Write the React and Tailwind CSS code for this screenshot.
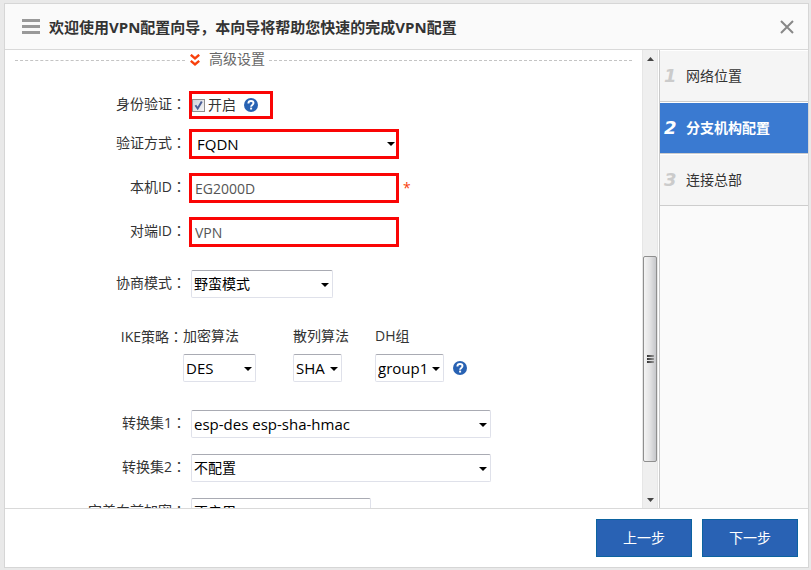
import React, { useState } from 'react';

const steps = [
  { no: '1', title: '网络位置' },
  { no: '2', title: '分支机构配置' },
  { no: '3', title: '连接总部' },
];

const Colon = () => <span className="font-['Noto_Sans_CJK_TC',sans-serif]">：</span>;

const HelpIcon = () => (
  <button type="button" aria-label="帮助" className="shrink-0 cursor-pointer">
    <svg width="14" height="14" viewBox="0 0 14 14" className="block">
      <circle cx="7" cy="7" r="7" fill="#2862b3" />
      <path d="M4.4 5.4C4.4 3.8 5.5 3 7 3s2.5.8 2.5 2.1c0 1.8-2.4 1.8-2.4 3.6" fill="none" stroke="#fff" strokeWidth="1.9" />
      <rect x="6.1" y="9.6" width="2" height="1.9" fill="#fff" />
    </svg>
  </button>
);

const Select = ({ id, options, className = '', textSize = 'text-[15px]', highlight = false }) => (
  <div className={`relative ${className}`}>
    <select
      id={id}
      className={`block w-full appearance-none bg-white text-black outline-none ${textSize} ${
        highlight
          ? 'h-[30px] border-3 border-[#fa0505] pl-[5px]'
          : 'h-7 rounded-xs border border-[#dfe1ea] border-t-[#a9abb3] pl-0.5'
      }`}
    >
      {options.map((option) => (
        <option key={option}>{option}</option>
      ))}
    </select>
    <svg width="8" height="4" viewBox="0 0 8 4" className="pointer-events-none absolute top-[13px] right-1">
      <path d="M0 0h8L4 4z" fill="#000" />
    </svg>
  </div>
);

const Row = ({ id, label, className, children }) => (
  <div className={`flex items-center ${className}`}>
    <label htmlFor={id} className="w-46 shrink-0 pr-[3px] pb-1 text-right whitespace-nowrap">
      {label}
      <Colon />
    </label>
    {children}
  </div>
);

const ScrollBar = () => (
  <div className="flex w-4 shrink-0 flex-col border-x border-[#e6e6e6] bg-[#efefef]" aria-hidden="true">
    <div className="flex h-[17px] items-center justify-center">
      <svg width="7" height="4" viewBox="0 0 7 4"><path d="M0 4h7L3.5 0z" fill="#444" /></svg>
    </div>
    <div className="flex-190" />
    <div className="flex flex-205 flex-col items-center justify-center gap-px rounded-xs border border-[#8f8f8f] bg-linear-to-r from-[#f4f4f4] via-[#e3e3e4] to-[#c6c7ca]">
      <div className="h-0.5 w-[7px] bg-linear-to-r from-[#333] to-[#999]" />
      <div className="h-0.5 w-[7px] bg-linear-to-r from-[#333] to-[#999]" />
      <div className="h-0.5 w-[7px] bg-linear-to-r from-[#333] to-[#999]" />
    </div>
    <div className="flex-29" />
    <div className="flex h-[17px] items-center justify-center">
      <svg width="7" height="4" viewBox="0 0 7 4"><path d="M0 0h7L3.5 4z" fill="#444" /></svg>
    </div>
  </div>
);

const App = () => {
  const [current, setCurrent] = useState(1);
  const [authEnabled, setAuthEnabled] = useState(true);

  return (
    <div className="flex h-screen bg-[#e9e9e9] pt-[3px] pr-0.5 pb-0.5 pl-1 font-['Open_Sans','Noto_Sans_CJK_SC',sans-serif] text-sm leading-5 text-[#333]">
      <div className="flex min-w-0 flex-1 flex-col border border-[#d6d6d6] bg-white">
        <header className="flex h-[46px] shrink-0 items-center border-b border-[#d9d9d9] bg-[#fafafa] pr-3.5 pl-[17px]">
          <svg width="18" height="15" viewBox="0 0 18 15" className="mr-[9px] shrink-0">
            <path d="M0 0h18v3H0zM0 6h18v3H0zM0 12h18v3H0z" fill="#999" />
          </svg>
          <h1 className="flex-1 truncate text-[15px] font-bold" lang="zh-CN">
            欢迎使用VPN配置向导，本向导将帮助您快速的完成VPN配置
          </h1>
          <button type="button" aria-label="关闭" className="cursor-pointer">
            <svg width="14" height="14" viewBox="0 0 14 14" className="block">
              <path d="M1 1l12 12M13 1L1 13" stroke="#888" strokeWidth="2" />
            </svg>
          </button>
        </header>

        <div className="flex min-h-0 flex-1">
          <form className="min-w-0 flex-1 overflow-hidden">
            <div className="flex h-5 items-center pr-2.5 pl-2.5 text-[#666]">
              <div className="w-[170px] border-t border-dashed border-[#c4c4c4]" />
              <svg width="10" height="12" viewBox="0 0 10 12" className="mx-[5px] shrink-0">
                <path d="M.8.8L5 4.4 9.2.8M.8 6.8L5 10.4l4.2-3.6" fill="none" stroke="#f8400c" strokeWidth="2.4" />
              </svg>
              <h2 className="mr-1 ml-1 shrink-0 pb-0.5">高级设置</h2>
              <div className="flex-1 border-t border-dashed border-[#c4c4c4]" />
            </div>

            <Row id="auth" label="身份验证" className="mt-[21px]">
              <div className="flex h-7 w-[84px] items-center border-3 border-[#fa0505]">
                <span className="relative mr-[3px] flex">
                  <input
                    id="auth"
                    type="checkbox"
                    checked={authEnabled}
                    onChange={(e) => setAuthEnabled(e.target.checked)}
                    className="size-[13px] appearance-none border border-[#8e8f8f] bg-linear-to-br from-[#cfd3da] to-[#f6f6f6]"
                  />
                  {authEnabled && (
                    <svg width="13" height="13" viewBox="0 0 13 13" className="pointer-events-none absolute inset-0">
                      <path d="M3.4 6.2l2.3 3.3L9.8 2.6" fill="none" stroke="#4a5f97" strokeWidth="2" />
                    </svg>
                  )}
                </span>
                <label htmlFor="auth" className="mr-2">开启</label>
                <HelpIcon />
              </div>
            </Row>
            <Row id="method" label="验证方式" className="mt-2.5">
              <Select id="method" options={['FQDN', 'IP']} className="w-[210px]" highlight />
            </Row>
            <Row id="localId" label="本机ID" className="mt-3.5">
              <input
                id="localId"
                type="text"
                defaultValue="EG2000D"
                className="h-[30px] w-[210px] border-3 border-[#fa0505] bg-white pl-[3px] text-sm text-[#555] outline-none"
              />
              <span className="ml-1 text-[#f8400c]">*</span>
            </Row>
            <Row id="peerId" label="对端ID" className="mt-3.5">
              <input
                id="peerId"
                type="text"
                defaultValue="VPN"
                className="h-[30px] w-[210px] border-3 border-[#fa0505] bg-white pl-[3px] text-sm text-[#555] outline-none"
              />
            </Row>
            <Row id="mode" label="协商模式" className="mt-[23px]">
              <Select id="mode" options={['野蛮模式', '主模式']} textSize="text-sm" className="ml-0.5 w-[142px]" />
            </Row>

            <div className="mt-7 flex">
              <div className="w-[178px] shrink-0 text-right">IKE策略<Colon /></div>
              <div className="flex w-[110px] flex-col gap-2">
                <label htmlFor="encrypt">加密算法</label>
                <Select id="encrypt" options={['DES', '3DES']} className="w-[73px]" />
              </div>
              <div className="flex w-[82px] flex-col gap-2">
                <label htmlFor="hash">散列算法</label>
                <Select id="hash" options={['SHA', 'MD5']} className="w-[49px]" />
              </div>
              <div className="flex flex-col gap-2">
                <label htmlFor="dh">DH组</label>
                <div className="flex items-center gap-[9px]">
                  <Select id="dh" options={['group1', 'group2']} className="w-[69px]" />
                  <HelpIcon />
                </div>
              </div>
            </div>

            <Row id="set1" label="转换集1" className="mt-7">
              <Select id="set1" options={['esp-des esp-sha-hmac']} className="ml-0.5 w-[300px]" />
            </Row>
            <Row id="set2" label="转换集2" className="mt-4">
              <Select id="set2" options={['不配置']} textSize="text-sm" className="ml-0.5 w-[300px]" />
            </Row>
            <Row id="pfs" label="完美向前加密" className="mt-4">
              <Select id="pfs" options={['不启用']} textSize="text-sm" className="ml-0.5 w-[180px]" />
            </Row>
          </form>

          <ScrollBar />

          <nav className="ml-px w-[149px] shrink-0 border-l border-[#c9c9c9] bg-[#fafafa]">
            {steps.map((step, index) => (
              <button
                key={step.no}
                type="button"
                onClick={() => setCurrent(index)}
                className={`flex h-[52px] w-full cursor-pointer items-center border-y border-t-white border-b-[#cdcdcd] pl-1 ${
                  index === current ? 'bg-[#3a7ad1] font-bold text-white' : 'bg-[#f5f5f5]'
                }`}
              >
                <span
                  className={`w-[22px] text-left font-['DejaVu_Sans',sans-serif] text-lg leading-5 font-bold italic ${
                    index === current ? 'text-white' : 'text-[#cbcbcb]'
                  }`}
                >
                  {step.no}
                </span>
                {step.title}
              </button>
            ))}
          </nav>
        </div>

        <footer className="flex shrink-0 justify-end gap-2.5 border-t border-[#d9d9d9] p-2.5">
          <button type="button" className="h-[38px] w-24 cursor-pointer border border-[#0c63a0] bg-[#2962b4] text-white">上一步</button>
          <button type="button" className="h-[38px] w-24 cursor-pointer border border-[#0c63a0] bg-[#2962b4] text-white">下一步</button>
        </footer>
      </div>
    </div>
  );
};

export default App;
